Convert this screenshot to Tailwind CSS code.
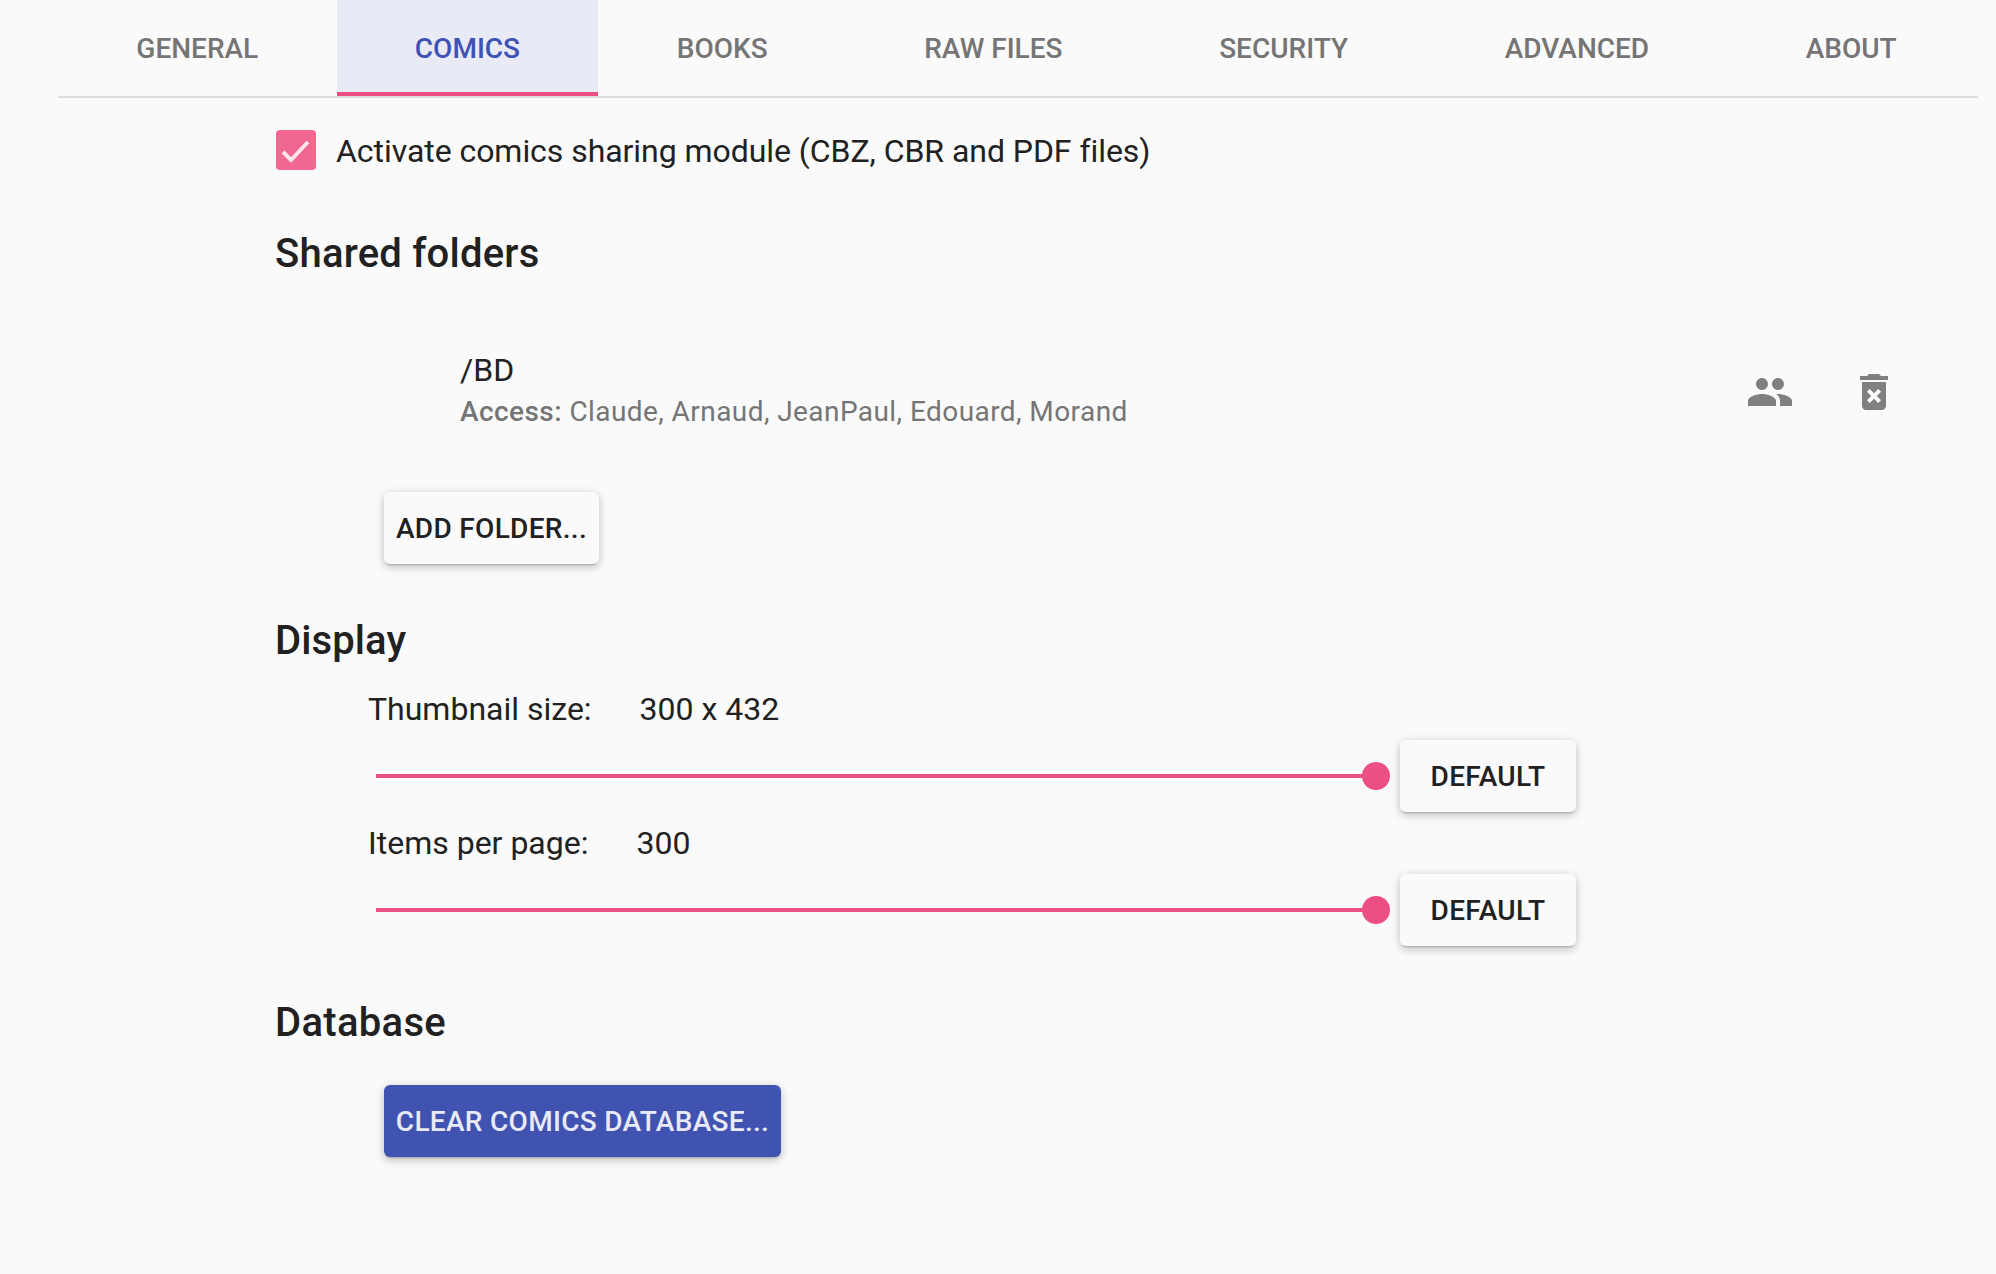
<!doctype html>
<html>
<head>
<meta charset="utf-8">
<script src="https://cdn.jsdelivr.net/npm/@tailwindcss/browser@4"></script>
</head>
<body class="bg-[#fafafa] text-[#212121] font-['Roboto',sans-serif] w-[1996px] h-[1274px] overflow-hidden">
<div class="ml-[58px] mr-[18px] flex h-[98px] border-b-2 border-[#dcdcdc] text-[28px] font-medium text-[#757575]">
  <div class="flex-auto h-[96px] flex items-center justify-center pt-[1px]">GENERAL</div>
  <div class="flex-auto h-[96px] flex items-center justify-center pt-[1px] bg-[#e8eaf6] text-[#3f51b5] shadow-[inset_0_-4px_0_#ec5083]">COMICS</div>
  <div class="flex-auto h-[96px] flex items-center justify-center pt-[1px]">BOOKS</div>
  <div class="flex-auto h-[96px] flex items-center justify-center pt-[1px]">RAW FILES</div>
  <div class="flex-auto h-[96px] flex items-center justify-center pt-[1px]">SECURITY</div>
  <div class="flex-auto h-[96px] flex items-center justify-center pt-[1px]">ADVANCED</div>
  <div class="flex-auto h-[96px] flex items-center justify-center pt-[1px] pr-[3px]">ABOUT</div>
</div>
<main class="ml-[276px] mr-[98px] flex flex-col items-start">
  <label class="mt-[32px] flex items-center gap-[20px] h-[40px] text-[32px]">
    <span class="w-[40px] h-[40px] rounded-[4px] bg-[#f0678f] flex">
      <svg width="40" height="40" viewBox="0 0 40 40" fill="none"><path d="M7 22 L15 30 L32 12" stroke="#fde4ec" stroke-width="4"/></svg>
    </span>
    <span class="pt-[2px] tracking-[-0.05px]">Activate comics sharing module (CBZ, CBR and PDF files)</span>
  </label>
  <h2 class="mt-[60px] -ml-[1px] h-[48px] leading-[48px] text-[40px] font-medium tracking-[0.22px]">Shared folders</h2>
  <div class="mt-[72px] pl-[184px] w-full h-[82px] flex items-center justify-between">
    <div>
      <div class="text-[32px] leading-[40px] h-[42px]">/BD</div>
      <div class="text-[28px] leading-[40px] text-[#757575] tracking-[0.43px] font-[450]"><span class="font-medium">Access:</span> Claude, Arnaud, JeanPaul, Edouard, Morand</div>
    </div>
    <div class="flex gap-[56px] items-center mt-[2px]">
      <svg width="48" height="48" viewBox="0 0 24 24" fill="#808080"><path d="M16 11c1.66 0 2.99-1.34 2.99-3S17.66 5 16 5c-1.66 0-3 1.34-3 3s1.34 3 3 3zm-8 0c1.66 0 2.99-1.34 2.99-3S9.66 5 8 5C6.34 5 5 6.34 5 8s1.34 3 3 3zm0 2c-2.33 0-7 1.17-7 3.5V19h14v-2.5c0-2.33-4.67-3.5-7-3.5zm8 0c-.29 0-.62.02-.97.05 1.16.84 1.97 1.97 1.97 3.45V19h6v-2.5c0-2.33-4.67-3.5-7-3.5z"/></svg>
      <svg width="48" height="48" viewBox="0 0 24 24" fill="#808080"><path d="M6 19c0 1.1.9 2 2 2h8c1.1 0 2-.9 2-2V7H6v12zm2.46-7.12l1.41-1.41L12 12.59l2.12-2.12 1.41 1.41L13.41 14l2.12 2.12-1.41 1.41L12 15.41l-2.12 2.12-1.41-1.41L10.59 14l-2.13-2.12zM15.5 4l-1-1h-5l-1 1H5v2h14V4z"/></svg>
    </div>
  </div>
  <button class="mt-[60px] ml-[108px] h-[72px] w-[215px] pt-[2px] rounded-[6px] bg-[#fafafa] text-[28px] font-medium tracking-[0.32px] text-center shadow-[0_3px_2px_-2px_rgba(0,0,0,.2),0_4px_10px_0_rgba(0,0,0,.14),0_1px_10px_0_rgba(0,0,0,.12)]">ADD FOLDER...</button>
  <h2 class="mt-[53px] -ml-[1px] h-[48px] leading-[48px] text-[40px] font-medium tracking-[0.1px]">Display</h2>
  <div class="mt-[24px] ml-[92px] h-[40px] flex items-center gap-[48px] text-[32px]"><span>Thumbnail size:</span><span>300 x 432</span></div>
  <div class="mt-[11px] ml-[100px] flex items-center h-[72px]">
    <div class="relative w-[1000px] h-[4px] bg-[#ec5083]">
      <span class="absolute right-[-14px] top-[-12px] w-[28px] h-[28px] rounded-full bg-[#ec5083]"></span>
    </div>
    <button class="ml-[24px] w-[176px] h-[72px] pt-[2px] rounded-[6px] bg-[#fafafa] text-[28px] font-medium tracking-[0.32px] shadow-[0_3px_2px_-2px_rgba(0,0,0,.2),0_4px_10px_0_rgba(0,0,0,.14),0_1px_10px_0_rgba(0,0,0,.12)]">DEFAULT</button>
  </div>
  <div class="mt-[11px] ml-[92px] h-[40px] flex items-center gap-[48px] text-[32px]"><span>Items per page:</span><span>300</span></div>
  <div class="mt-[11px] ml-[100px] flex items-center h-[72px]">
    <div class="relative w-[1000px] h-[4px] bg-[#ec5083]">
      <span class="absolute right-[-14px] top-[-12px] w-[28px] h-[28px] rounded-full bg-[#ec5083]"></span>
    </div>
    <button class="ml-[24px] w-[176px] h-[72px] pt-[2px] rounded-[6px] bg-[#fafafa] text-[28px] font-medium tracking-[0.32px] shadow-[0_3px_2px_-2px_rgba(0,0,0,.2),0_4px_10px_0_rgba(0,0,0,.14),0_1px_10px_0_rgba(0,0,0,.12)]">DEFAULT</button>
  </div>
  <h2 class="mt-[53px] -ml-[1px] h-[48px] leading-[48px] text-[40px] font-medium tracking-[0.3px]">Database</h2>
  <button class="mt-[38px] ml-[108px] h-[72px] w-[397px] pt-[2px] rounded-[6px] bg-[#4153b1] text-[#e8eaf6] text-[28px] font-medium tracking-[0.3px] shadow-[0_3px_2px_-2px_rgba(0,0,0,.2),0_4px_10px_0_rgba(0,0,0,.14),0_1px_10px_0_rgba(0,0,0,.12)]">CLEAR COMICS DATABASE...</button>
</main>
</body>
</html>
